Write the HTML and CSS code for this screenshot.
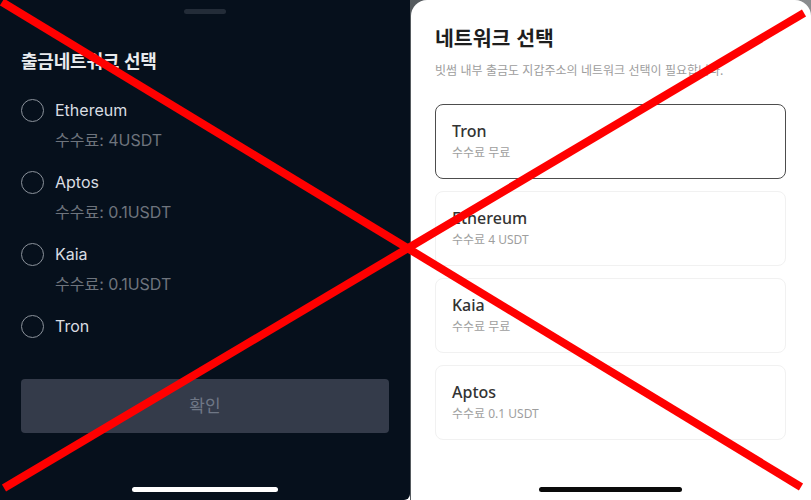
FILE: index.html
```html
<!DOCTYPE html>
<html lang="ko">
<head>
<meta charset="utf-8">
<title>네트워크 선택</title>
<link rel="stylesheet" href="styles.css">
</head>
<body>
<div class="stage">
  <section class="dark">
    <div class="handle"></div>
    <h2 class="dark-title">출금네트워크 선택</h2>
    <ul class="radio-list">
      <li class="radio-item">
        <div class="radio-row"><span class="radio"></span><span class="radio-name">Ethereum</span></div>
        <div class="radio-fee">수수료: 4USDT</div>
      </li>
      <li class="radio-item">
        <div class="radio-row"><span class="radio"></span><span class="radio-name">Aptos</span></div>
        <div class="radio-fee">수수료: 0.1USDT</div>
      </li>
      <li class="radio-item">
        <div class="radio-row"><span class="radio"></span><span class="radio-name">Kaia</span></div>
        <div class="radio-fee">수수료: 0.1USDT</div>
      </li>
      <li class="radio-item">
        <div class="radio-row"><span class="radio"></span><span class="radio-name">Tron</span></div>
      </li>
    </ul>
    <button class="confirm" type="button">확인</button>
    <div class="home-bar light"></div>
  </section>
  <section class="light-wrap">
    <div class="sheet">
      <h2 class="sheet-title">네트워크 선택</h2>
      <p class="sheet-sub">빗썸 내부 출금도 지갑주소의 네트워크 선택이 필요합니다.</p>
      <div class="cards">
        <div class="card selected">
          <div class="card-name">Tron</div>
          <div class="card-fee">수수료 무료</div>
        </div>
        <div class="card">
          <div class="card-name">Ethereum</div>
          <div class="card-fee">수수료 4 USDT</div>
        </div>
        <div class="card">
          <div class="card-name">Kaia</div>
          <div class="card-fee">수수료 무료</div>
        </div>
        <div class="card">
          <div class="card-name">Aptos</div>
          <div class="card-fee">수수료 0.1 USDT</div>
        </div>
      </div>
      <div class="home-bar darkbar"></div>
    </div>
  </section>
  <svg class="cross" width="811" height="500" viewBox="0 0 811 500" aria-hidden="true">
    <line x1="2" y1="2" x2="801" y2="487" stroke="#ff0000" stroke-width="8"/>
    <line x1="4" y1="488" x2="804" y2="13" stroke="#ff0000" stroke-width="8"/>
  </svg>
</div>
</body>
</html>
```

FILE: styles.css
```css
* { box-sizing: border-box; }
html, body { margin: 0; padding: 0; }
body {
  width: 811px;
  height: 500px;
  overflow: hidden;
  background: #ffffff;
  font-family: Inter, "Noto Sans CJK KR", sans-serif;
}
.stage {
  position: relative;
  display: flex;
  width: 811px;
  height: 500px;
}
.dark {
  width: 410px;
  height: 500px;
  background: #06101c;
  border-bottom-right-radius: 6px;
  display: flex;
  flex-direction: column;
  padding: 9px 21px 0 21px;
}
.handle {
  align-self: center;
  width: 42px;
  height: 5px;
  border-radius: 3px;
  background: #232c38;
}
.dark-title {
  margin: 34px 0 0 0;
  font-family: "Noto Sans CJK KR", sans-serif;
  font-size: 18px;
  line-height: 24px;
  font-weight: 700;
  letter-spacing: -0.2px;
  color: #e9ebee;
}
.radio-list {
  list-style: none;
  margin: 26px 0 0 0;
  padding: 0;
  display: flex;
  flex-direction: column;
  gap: 18px;
}
.radio-item {
  display: flex;
  flex-direction: column;
  gap: 6px;
}
.radio-row {
  display: flex;
  align-items: center;
  gap: 11px;
  height: 24px;
}
.radio {
  width: 23px;
  height: 23px;
  border-radius: 50%;
  border: 1.6px solid #8b929b;
  flex: none;
}
.radio-name {
  font-size: 16px;
  line-height: 24px;
  color: #d9dde2;
}
.radio-fee {
  padding-left: 34px;
  font-size: 16px;
  line-height: 24px;
  color: #6e747d;
}
.confirm {
  margin-top: 41px;
  height: 54px;
  width: 100%;
  border: 0;
  border-radius: 4px;
  background: #343b4a;
  color: #6f7786;
  font-family: "Noto Sans CJK KR", sans-serif;
  font-size: 17px;
  padding: 0 0 3px 0;
}
.home-bar {
  align-self: center;
  width: 146px;
  height: 5px;
  border-radius: 3px;
}
.home-bar.light {
  margin-top: 54px;
  background: #ffffff;
}
.light-wrap {
  flex: 1;
  height: 500px;
  background: linear-gradient(90deg, #555a5e 0%, #8a8c8e 100%);
  padding-left: 1px;
}
.sheet {
  height: 500px;
  background: #ffffff;
  border-radius: 16px 16px 0 0;
  padding: 23px 25px 0 24px;
  display: flex;
  flex-direction: column;
  font-family: "Noto Sans", "Noto Sans CJK KR", sans-serif;
}
.sheet-title {
  margin: 0;
  font-family: "Noto Sans CJK KR", sans-serif;
  font-size: 20.5px;
  line-height: 28px;
  font-weight: 700;
  letter-spacing: 0;
  color: #1e1e1e;
}
.sheet-sub {
  margin: 10px 0 0 0;
  font-family: "Noto Sans CJK KR", sans-serif;
  font-size: 12px;
  line-height: 18px;
  color: #9d9d9d;
}
.cards {
  margin-top: 25px;
  display: flex;
  flex-direction: column;
  gap: 12.4px;
}
.card {
  height: 74.7px;
  border: 1px solid #f1f1f1;
  border-radius: 8px;
  padding: 15px 16px 0 16px;
}
.card.selected {
  border-color: #4d4d4d;
}
.card-name {
  font-size: 16px;
  line-height: 22px;
  font-weight: 500;
  color: #333333;
}
.card-fee {
  margin-top: 3px;
  font-family: "Noto Sans", "Noto Sans CJK KR", sans-serif;
  font-size: 12px;
  line-height: 16px;
  color: #9e9e9e;
}
.home-bar.darkbar {
  margin-top: auto;
  margin-bottom: 8px;
  width: 143px;
  background: #0a0a0a;
}
.cross {
  position: absolute;
  left: 0;
  top: 0;
  pointer-events: none;
}
```
